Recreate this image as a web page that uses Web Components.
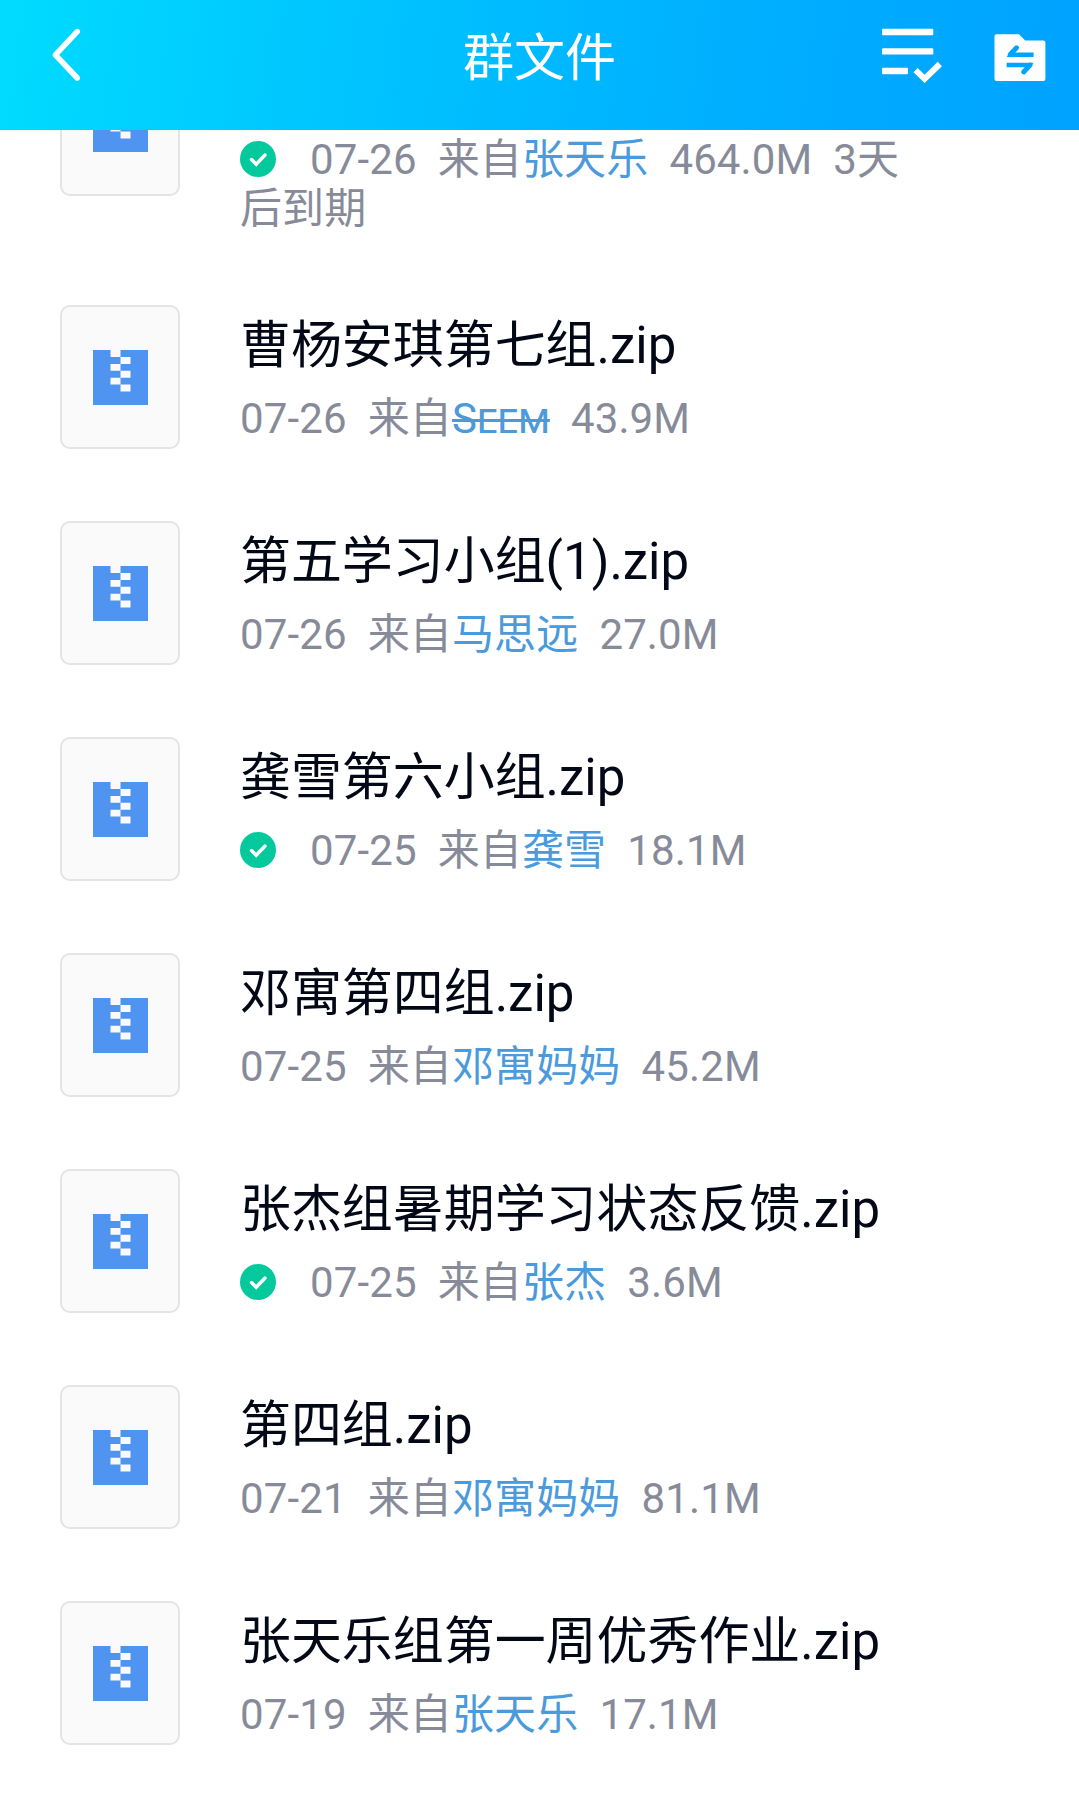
<!DOCTYPE html>
<html lang="zh-CN">
<head>
<meta charset="utf-8">
<title>群文件</title>
<style>
body {
    margin: 0;
    background: #fff;
    font-family: Roboto, "Noto Sans CJK SC", sans-serif;
}
</style>
</head>
<body>
<group-files></group-files>

<script>
class AppBar extends HTMLElement {
    constructor() {
        super();
        this.shadowDOM = this.attachShadow({mode: "open"});
        this.shadowDOM.innerHTML = `
        <style>
        :host {
            display: grid;
            grid-template-columns: 1fr auto 1fr;
            align-items: center;
            box-sizing: border-box;
            height: 130px;
            padding: 0 32px 18px 48px;
            background: linear-gradient(97deg, #00dcff 0%, #00d2ff 13%, #00c4ff 33%, #00b7ff 54%, #00acff 75%, #00a3ff 100%);
            color: #fff;
            flex: none;
        }
        svg {
            display: block;
        }
        h1 {
            margin: 0 0 0 -16px;
            padding-top: 5px;
            font-size: 51px;
            line-height: 60px;
            font-weight: 400;
        }
        .actions {
            display: flex;
            justify-content: flex-end;
            gap: 47px;
        }
        </style>
        <svg class="back" width="36" height="60" viewBox="48 26 36 60" fill="none" stroke="#fff" stroke-width="5.6" stroke-linecap="round" stroke-linejoin="round">
            <path d="M77.2 31.6 55.4 54.8 77.2 78"/>
        </svg>
        <h1><slot></slot></h1>
        <div class="actions">
            <svg width="64" height="60" viewBox="880 26 64 60">
                <g fill="#fff">
                    <rect x="882" y="28.8" width="51.3" height="6.4" rx="1.2"/>
                    <rect x="882" y="48.2" width="51.3" height="6.4" rx="1.2"/>
                    <rect x="882" y="67.8" width="26" height="6.4" rx="1.2"/>
                </g>
                <path d="M915.6 70.2 924.6 78.9 939.8 64" fill="none" stroke="#fff" stroke-width="6"/>
            </svg>
            <svg width="56" height="60" viewBox="991 26 56 60">
                <path d="M996.5 34.2H1019l6.2 6.2h18.2a2 2 0 0 1 2 2V79a2 2 0 0 1-2 2H996.5a2 2 0 0 1-2-2V36.2a2 2 0 0 1 2-2z" fill="#fff"/>
                <g fill="none" stroke="#00a4ff" stroke-width="4.6">
                    <path d="M1033.6 54.7H1010l7-7.4" stroke-linejoin="bevel"/>
                    <path d="M1006.6 65H1030.2l-7 7.4" stroke-linejoin="bevel"/>
                    <path d="M1010 54.7 1016.6 47.6M1030.2 65 1023.6 72.1" stroke-linecap="round"/>
                </g>
                <path d="M1006.5 57 1011 52v5zM1033.7 62.7 1029.2 67.7v-5z" fill="#00a4ff"/>
            </svg>
        </div>`;
    }
}
customElements.define("app-bar", AppBar);

class ZipThumb extends HTMLElement {
    constructor() {
        super();
        this.shadowDOM = this.attachShadow({mode: "open"});
        this.shadowDOM.innerHTML = `
        <style>
        :host {
            display: flex;
            align-items: center;
            justify-content: center;
            box-sizing: border-box;
            width: 120px;
            height: 144px;
            border: 2px solid #e4e4e4;
            border-radius: 10px;
            background: #fafafa;
            flex: none;
        }
        svg {
            display: block;
            margin: 1px 0 0 1px;
        }
        </style>
        <svg width="55" height="55" viewBox="0 0 55 55">
            <rect width="55" height="55" fill="#4e94f0"/>
            <path d="M17.5 0h10v7h-10zM27.5 7h10v6.9h-10zM17.5 13.9h10v6.9h-10zM27.5 20.8h10v6.9h-10zM17.5 27.7h10v6.9h-10zM27.5 34.6h10v6.9h-10z" fill="#fafafa"/>
        </svg>`;
    }
}
customElements.define("zip-thumb", ZipThumb);

class FileItem extends HTMLElement {
    constructor() {
        super();
        this.shadowDOM = this.attachShadow({mode: "open"});
    }

    set file(file) {
        this._file = file;
        this.render();
    }

    render() {
        const f = this._file;
        // starts right after the backtick: the line keeps its white space
        const check = `<svg width="36" height="36" viewBox="0 0 36 36">
                <circle cx="18" cy="18" r="18" fill="#04c99c"/>
                <path d="M11.5 18.5 16.2 23.2 25 14" fill="none" stroke="#fff" stroke-width="3.4" stroke-linecap="round"/>
            </svg>`;
        this.shadowDOM.innerHTML = `
        <style>
        :host {
            display: flex;
            align-items: center;
            gap: 60px;
            box-sizing: border-box;
            height: 216px;
            padding: 0 160px 0 60px;
        }
        .info {
            flex: 1;
            padding-top: var(--info-top, 4px);
        }
        h2 {
            margin: 0;
            height: 60px;
            font-size: 50.95px;
            line-height: 60px;
            font-weight: 400;
            color: #030816;
            white-space: nowrap;
        }
        p {
            margin: 18px 0 0;
            font-size: 42px;
            line-height: 49px;
            letter-spacing: 0.12px;
            color: #878b99;
            white-space: pre-wrap;
        }
        svg {
            margin-right: 34px;
            vertical-align: -3px;
        }
        .from {
            color: #4a9adc;
        }
        .struck {
            font-variant-caps: small-caps;
            text-decoration: line-through;
            text-decoration-thickness: 3px;
        }
        </style>
        <zip-thumb></zip-thumb>
        <div class="info">
            <h2>${f.name}</h2>
            <p>${f.saved ? check : ""}${f.date}  来自<span class="from ${f.struck ? "struck" : ""}">${f.from}</span>  ${f.size}${f.expire ? "  " + f.expire : ""}</p>
        </div>`;
    }
}
customElements.define("file-item", FileItem);

const files = [
    {name: "", date: "07-26", from: "张天乐", size: "464.0M", expire: "3天后到期", saved: true},
    {name: "曹杨安琪第七组.zip", date: "07-26", from: "Seem", size: "43.9M", struck: true},
    {name: "第五学习小组(1).zip", date: "07-26", from: "马思远", size: "27.0M"},
    {name: "龚雪第六小组.zip", date: "07-25", from: "龚雪", size: "18.1M", saved: true},
    {name: "邓寓第四组.zip", date: "07-25", from: "邓寓妈妈", size: "45.2M"},
    {name: "张杰组暑期学习状态反馈.zip", date: "07-25", from: "张杰", size: "3.6M", saved: true},
    {name: "第四组.zip", date: "07-21", from: "邓寓妈妈", size: "81.1M"},
    {name: "张天乐组第一周优秀作业.zip", date: "07-19", from: "张天乐", size: "17.1M"}
];

class GroupFiles extends HTMLElement {
    constructor() {
        super();
        this.shadowDOM = this.attachShadow({mode: "open"});
    }

    connectedCallback() {
        this.shadowDOM.innerHTML = `
        <style>
        :host {
            display: flex;
            flex-direction: column;
            height: 1810px;
            overflow: hidden;
        }
        main {
            flex: 1;
            overflow: hidden;
        }
        /* the list is scrolled part of the way past its first file */
        file-item:first-child {
            --info-top: 42px;
            height: 290px;
            margin-top: -151px;
        }
        </style>
        <app-bar>群文件</app-bar>
        <main></main>`;
        const main = this.shadowDOM.querySelector("main");
        files.forEach(file => {
            const item = document.createElement("file-item");
            item.file = file;
            main.appendChild(item);
        });
    }
}
customElements.define("group-files", GroupFiles);
</script>
</body>
</html>
